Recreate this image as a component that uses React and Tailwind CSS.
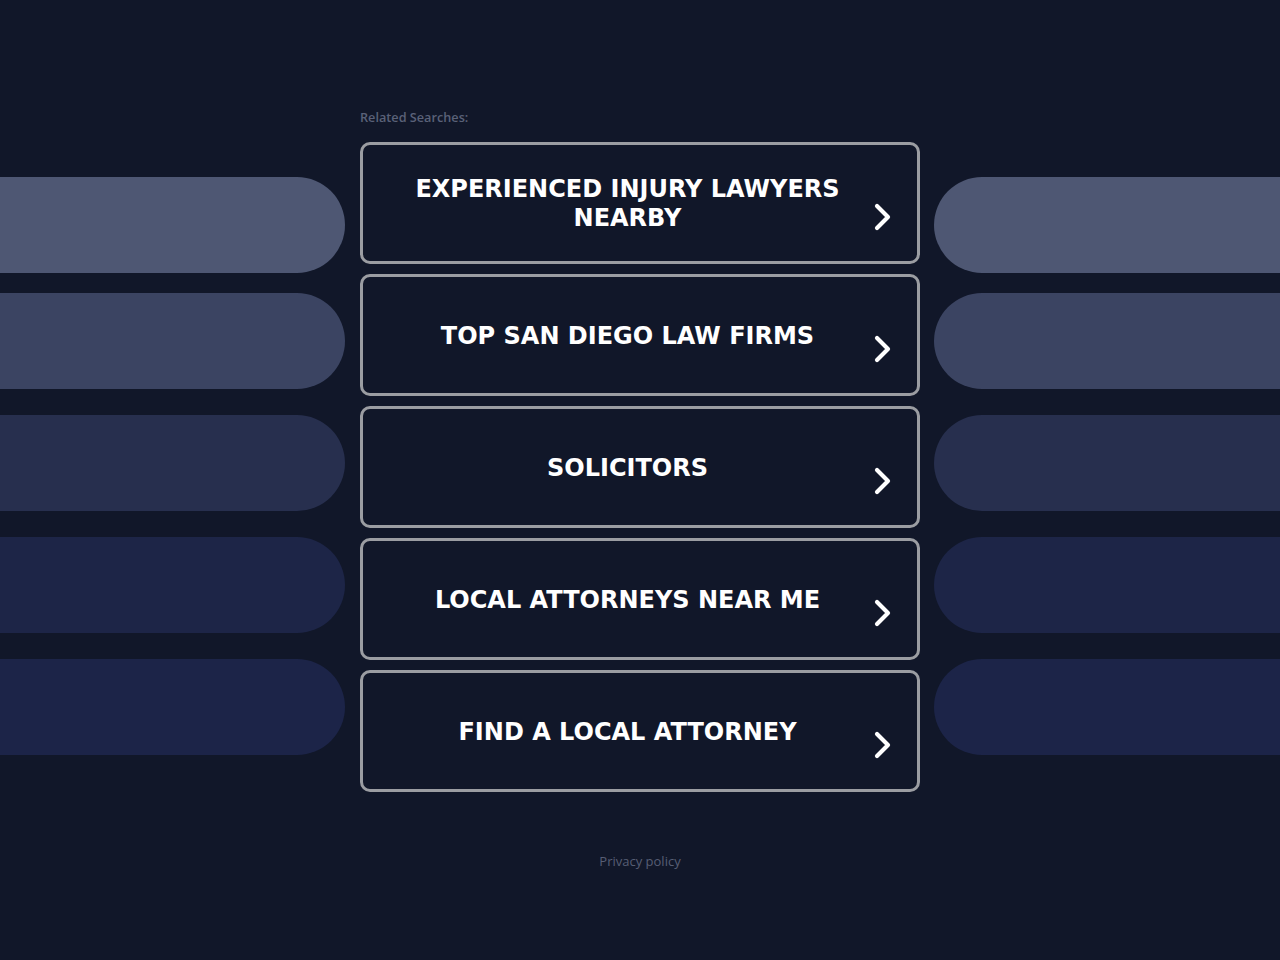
import React from "react";

const searches = [
  "EXPERIENCED INJURY LAWYERS NEARBY",
  "TOP SAN DIEGO LAW FIRMS",
  "SOLICITORS",
  "LOCAL ATTORNEYS NEAR ME",
  "FIND A LOCAL ATTORNEY",
];

const pills = [
  { bg: "bg-[#4e5773]", mt: "mt-0" },
  { bg: "bg-[#3b4462]", mt: "mt-[20px]" },
  { bg: "bg-[#272f4e]", mt: "mt-[26px]" },
  { bg: "bg-[#1d2547]", mt: "mt-[26px]" },
  { bg: "bg-[#1c2448]", mt: "mt-[26px]" },
];

function Chevron() {
  return (
    <svg width="18" height="28" viewBox="0 0 18 28" fill="none" className="shrink-0">
      <path
        d="M3 3 L14 14 L3 25"
        stroke="white"
        strokeWidth="4.2"
        strokeLinecap="round"
        strokeLinejoin="round"
      />
    </svg>
  );
}

function SideColumn({ side }) {
  return (
    <div className="flex flex-col pt-[177px]">
      {pills.map((p, i) => (
        <div
          key={i}
          className={`h-[96px] ${p.bg} ${p.mt} ${
            side === "left" ? "rounded-r-[48px]" : "rounded-l-[48px]"
          }`}
        />
      ))}
    </div>
  );
}

export default function App() {
  return (
    <div className="min-h-screen w-full bg-[#111729] flex">
      <div className="w-[345px] shrink-0">
        <SideColumn side="left" />
      </div>

      <div className="w-[560px] shrink-0 ml-[15px] flex flex-col pt-[110px]">
        <div className="text-[12.7px] leading-[14px] text-[#5a6178] font-['Open_Sans',sans-serif] font-semibold">
          Related Searches:
        </div>
        <div className="mt-[18px] flex flex-col gap-[10px]">
          {searches.map((s) => (
            <a
              key={s}
              href="#"
              className="h-[122px] rounded-[10px] border-[3px] border-[#9b9da2] flex items-center pl-[24px] pr-[25px]"
            >
              <span className="flex-1 mt-[2px] text-center text-white font-bold text-[24px] leading-[29px] tracking-[0px] font-['DejaVu_Sans',sans-serif]">
                {s}
              </span>
              <span className="ml-[6px] mt-[28px] flex">
                <Chevron />
              </span>
            </a>
          ))}
        </div>
        <div className="mt-[61px] text-center text-[13px] leading-[16px] text-[#575e74] font-['Open_Sans',sans-serif]">
          Privacy policy
        </div>
      </div>

      <div className="flex-1 ml-[14px]">
        <SideColumn side="right" />
      </div>
    </div>
  );
}
